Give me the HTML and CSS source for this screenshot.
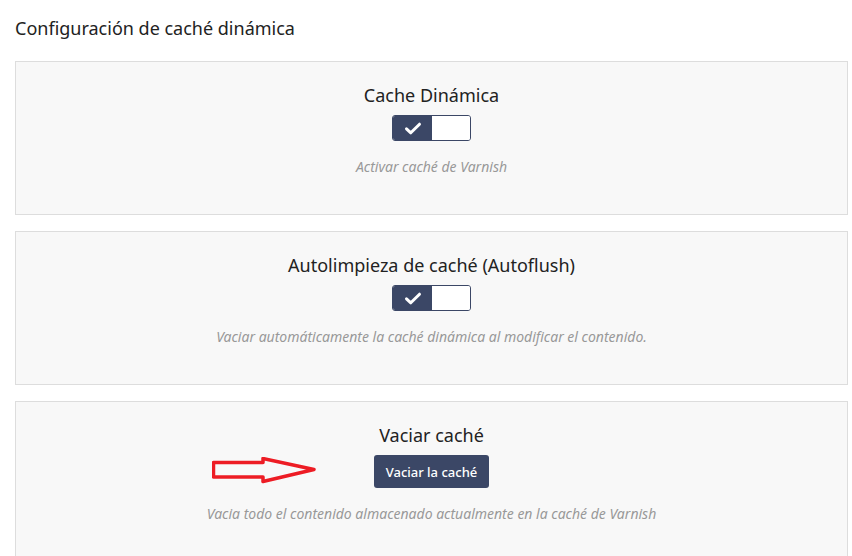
FILE: index.html
```html
<!DOCTYPE html>
<html lang="es">
<head>
    <meta charset="UTF-8">
    <meta name="viewport" content="width=device-width, initial-scale=1.0">
    <title>Configuración de caché dinámica</title>
    <link rel="stylesheet" href="styles.css">
</head>
<body>
    <div class="page">
        <h2 class="page-title">Configuración de caché dinámica</h2>

        <!-- Cache Dinamica -->
        <div class="card">
            <h3 class="card-title">Cache Dinámica</h3>
            <div class="toggle">
                <span class="toggle-on">
                    <svg width="18" height="13" viewBox="0 0 18 13"><path d="M2.5 6.8 L6.8 10.8 L15.5 2.2" fill="none" stroke="#fff" stroke-width="3" stroke-linecap="round" stroke-linejoin="round"/></svg>
                </span>
                <span class="toggle-off"></span>
            </div>
            <p class="card-desc">Activar caché de Varnish</p>
        </div>

        <!-- Autoflush -->
        <div class="card">
            <h3 class="card-title">Autolimpieza de caché (Autoflush)</h3>
            <div class="toggle">
                <span class="toggle-on">
                    <svg width="18" height="13" viewBox="0 0 18 13"><path d="M2.5 6.8 L6.8 10.8 L15.5 2.2" fill="none" stroke="#fff" stroke-width="3" stroke-linecap="round" stroke-linejoin="round"/></svg>
                </span>
                <span class="toggle-off"></span>
            </div>
            <p class="card-desc">Vaciar automáticamente la caché dinámica al modificar el contenido.</p>
        </div>

        <!-- Vaciar cache -->
        <div class="card card-flush">
            <h3 class="card-title">Vaciar caché</h3>
            <div class="btn-row">
                <svg class="arrow" width="106" height="27" viewBox="0 0 106 27">
                    <polygon points="1.5,5.5 51,5.5 51,1.5 102,12.5 51,24.5 51,20 1.5,20" fill="none" stroke="#ed1c24" stroke-width="3.5" stroke-linejoin="round"/>
                </svg>
                <button class="btn" type="button">Vaciar la caché</button>
            </div>
            <p class="card-desc">Vacia todo el contenido almacenado actualmente en la caché de Varnish</p>
        </div>
    </div>
</body>
</html>
```

FILE: styles.css
```css
body {
    margin: 0;
    padding: 0;
    background-color: #ffffff;
    font-family: "Noto Sans", "Open Sans", sans-serif;
    color: #222222;
}
.page {
    padding: 16px 4px 0 15px;
}
.page-title {
    margin: 0 0 21px 0;
    font-size: 18px;
    font-weight: normal;
    line-height: 24px;
    color: #222222;
}
.card {
    background-color: #f8f8f8;
    border: 1px solid #dddddd;
    padding: 21px 16px 38px;
    margin-bottom: 16px;
    text-align: center;
    display: flex;
    flex-direction: column;
    align-items: center;
}
.card-title {
    margin: 0;
    font-size: 18px;
    font-weight: normal;
    line-height: 24px;
    color: #222222;
}
.toggle {
    display: flex;
    width: 79px;
    height: 26px;
    margin-top: 8px;
    border: 1px solid #3b4766;
    border-radius: 3px;
    box-sizing: border-box;
    overflow: hidden;
}
.toggle-on {
    width: 39px;
    background-color: #3b4766;
    display: flex;
    align-items: center;
    justify-content: center;
}
.toggle-off {
    flex: 1;
    background-color: #ffffff;
}
.card-desc {
    margin: 17px 0 0 0;
    font-size: 14px;
    line-height: 18px;
    font-style: italic;
    color: #999999;
}
.btn-row {
    position: relative;
    margin-top: 8px;
}
.btn {
    display: block;
    width: 115px;
    height: 33px;
    padding: 0;
    background-color: #3b4766;
    color: #ffffff;
    border: none;
    border-radius: 3px;
    font-family: "Noto Sans", "Open Sans", sans-serif;
    font-size: 13px;
    font-weight: 500;
    cursor: pointer;
}
.arrow {
    position: absolute;
    left: -162px;
    top: 2px;
}
```
